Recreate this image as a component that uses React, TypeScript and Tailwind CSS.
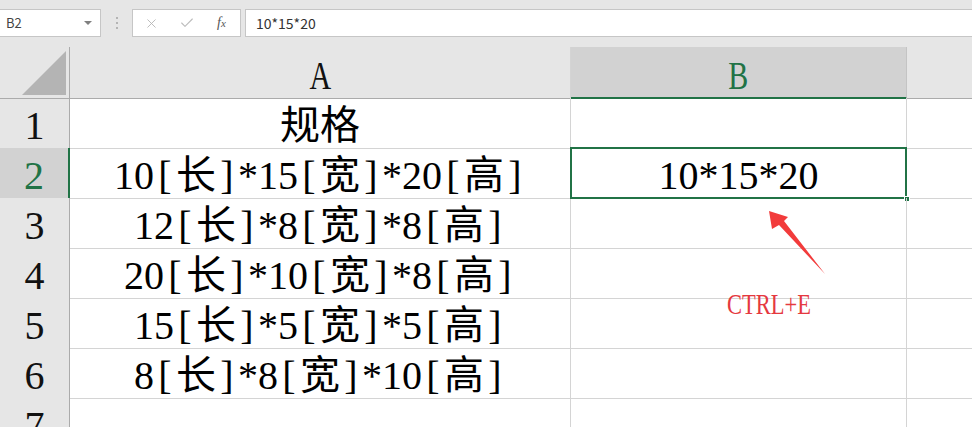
import { X, Check } from "lucide-react"

const serif = { fontFamily: '"Liberation Serif", "Noto Sans CJK SC", serif' }
const ui = { fontFamily: '"Noto Sans CJK SC", "Liberation Sans", sans-serif' }

const rows = [
  { n: "1", a: "规格", b: "" },
  { n: "2", a: "10[长]*15[宽]*20[高]", b: "10*15*20" },
  { n: "3", a: "12[长]*8[宽]*8[高]", b: "" },
  { n: "4", a: "20[长]*10[宽]*8[高]", b: "" },
  { n: "5", a: "15[长]*5[宽]*5[高]", b: "" },
  { n: "6", a: "8[长]*8[宽]*10[高]", b: "" },
  { n: "7", a: "", b: "" },
]

// brackets take a half-width cell, like in the sheet's font
function CellText({ text }: { text: string }) {
  const parts = text.split(/([\[\]])/)
  return (
    <span className="whitespace-nowrap">
      {parts.map((p, i) =>
        p === "[" || p === "]" ? (
          <span key={i} className="inline-block w-[22px] text-center">
            {p}
          </span>
        ) : (
          <span key={i}>{p}</span>
        )
      )}
    </span>
  )
}

function FormulaBar() {
  return (
    <div className="h-[47px] bg-[#e6e6e6] flex items-start pt-[9px]" style={ui}>
      {/* name box */}
      <div className="w-[101px] h-[28px] bg-white border border-l-0 border-[#c6c6c6] flex items-center justify-between pl-[6px] pr-[8px]">
        <span className="text-[13px] text-[#444]">B2</span>
        <span className="w-0 h-0 border-l-[4px] border-r-[4px] border-t-[4px] border-l-transparent border-r-transparent border-t-[#808080]" />
      </div>
      <div className="w-[31px] h-[28px] flex flex-col items-center justify-center gap-[3px]">
        <span className="w-[2px] h-[2px] bg-[#b4b4b4]" />
        <span className="w-[2px] h-[2px] bg-[#b4b4b4]" />
        <span className="w-[2px] h-[2px] bg-[#b4b4b4]" />
      </div>
      {/* cancel / enter / function */}
      <div className="w-[109px] h-[28px] bg-white border border-[#c6c6c6] flex items-center pl-[11px]">
        <X size={15} strokeWidth={1.4} className="text-[#b4b4b4]" />
        <Check size={16} strokeWidth={1.6} className="text-[#bcbcbc] ml-[20px]" />
        <span className="ml-[22px] text-[14px] italic text-[#555] leading-none" style={serif}>
          f<span className="text-[11px]">x</span>
        </span>
      </div>
      <div className="ml-[4px] flex-1 h-[28px] bg-white border border-r-0 border-[#c6c6c6] flex items-center pl-[10px]">
        <span className="text-[14px] text-[#333]">10*15*20</span>
      </div>
    </div>
  )
}

export default function App() {
  return (
    <div className="relative w-[972px] h-[427px] overflow-hidden bg-white" style={serif}>
      <FormulaBar />

      {/* column headers */}
      <div className="grid grid-cols-[70px_501px_336px_1fr] h-[51px] bg-[#e6e6e6]">
        <div className="relative border-r border-b border-[#ababab]">
          <svg className="absolute left-0 top-0" width="69" height="50" viewBox="0 0 69 50">
            <polygon points="22,48 66,48 66,4" fill="#b4b4b4" />
          </svg>
        </div>
        <div className="border-r border-b border-r-[#d4d4d4] border-b-[#ababab] flex justify-center">
          <span className="text-[40px] leading-[50px] translate-y-[4px] scale-x-75 inline-block text-[#111]">A</span>
        </div>
        <div className="bg-[#d2d2d2] border-r border-r-[#c4c4c4] border-b-2 border-b-[#217346] flex justify-center">
          <span className="text-[40px] leading-[50px] translate-y-[4px] scale-x-75 inline-block text-[#217346]">B</span>
        </div>
        <div className="border-b border-[#ababab]" />
      </div>

      {/* body */}
      {rows.map((r) => {
        const sel = r.n === "2"
        return (
          <div key={r.n} className="grid grid-cols-[70px_501px_336px_1fr] h-[50px]">
            <div
              className={
                sel
                  ? "bg-[#d2d2d2] border-b border-b-[#d0d0d0] border-r-2 border-r-[#217346] flex justify-center"
                  : "bg-[#e6e6e6] border-b border-b-[#d0d0d0] border-r border-r-[#ababab] flex justify-center"
              }
            >
              <span className={sel ? "text-[40px] leading-[50px] translate-y-[3px] text-[#217346]" : "text-[40px] leading-[50px] translate-y-[3px] text-[#111]"}>
                {r.n}
              </span>
            </div>
            <div className="border-r border-b border-[#d4d4d4] flex justify-center">
              <span className="text-[40px] leading-[50px] translate-y-[3px] text-black">
                <CellText text={r.a} />
              </span>
            </div>
            <div className="relative border-r border-b border-[#d4d4d4] flex justify-center">
              <span className="text-[40px] leading-[50px] translate-y-[3px] text-black">{r.b}</span>
              {sel && (
                <>
                  <div className="absolute -left-[1px] -top-[1px] -right-[1px] -bottom-[1px] border-2 border-[#217346]" />
                  <div className="absolute -right-[4px] -bottom-[4px] w-[6px] h-[6px] bg-[#217346] border border-white" />
                </>
              )}
            </div>
            <div className="border-b border-[#d4d4d4]" />
          </div>
        )
      })}

      {/* annotation */}
      <svg className="absolute left-0 top-0 pointer-events-none" width="972" height="427" viewBox="0 0 972 427">
        <polygon points="769,211 772,229 779,225 825,274 784,221 788,217" fill="#f23b3b" />
      </svg>
      <span className="absolute left-[727px] top-[289px] text-[30px] leading-none text-[#e5393f] scale-x-75 origin-left inline-block whitespace-nowrap">
        CTRL+E
      </span>
    </div>
  )
}
